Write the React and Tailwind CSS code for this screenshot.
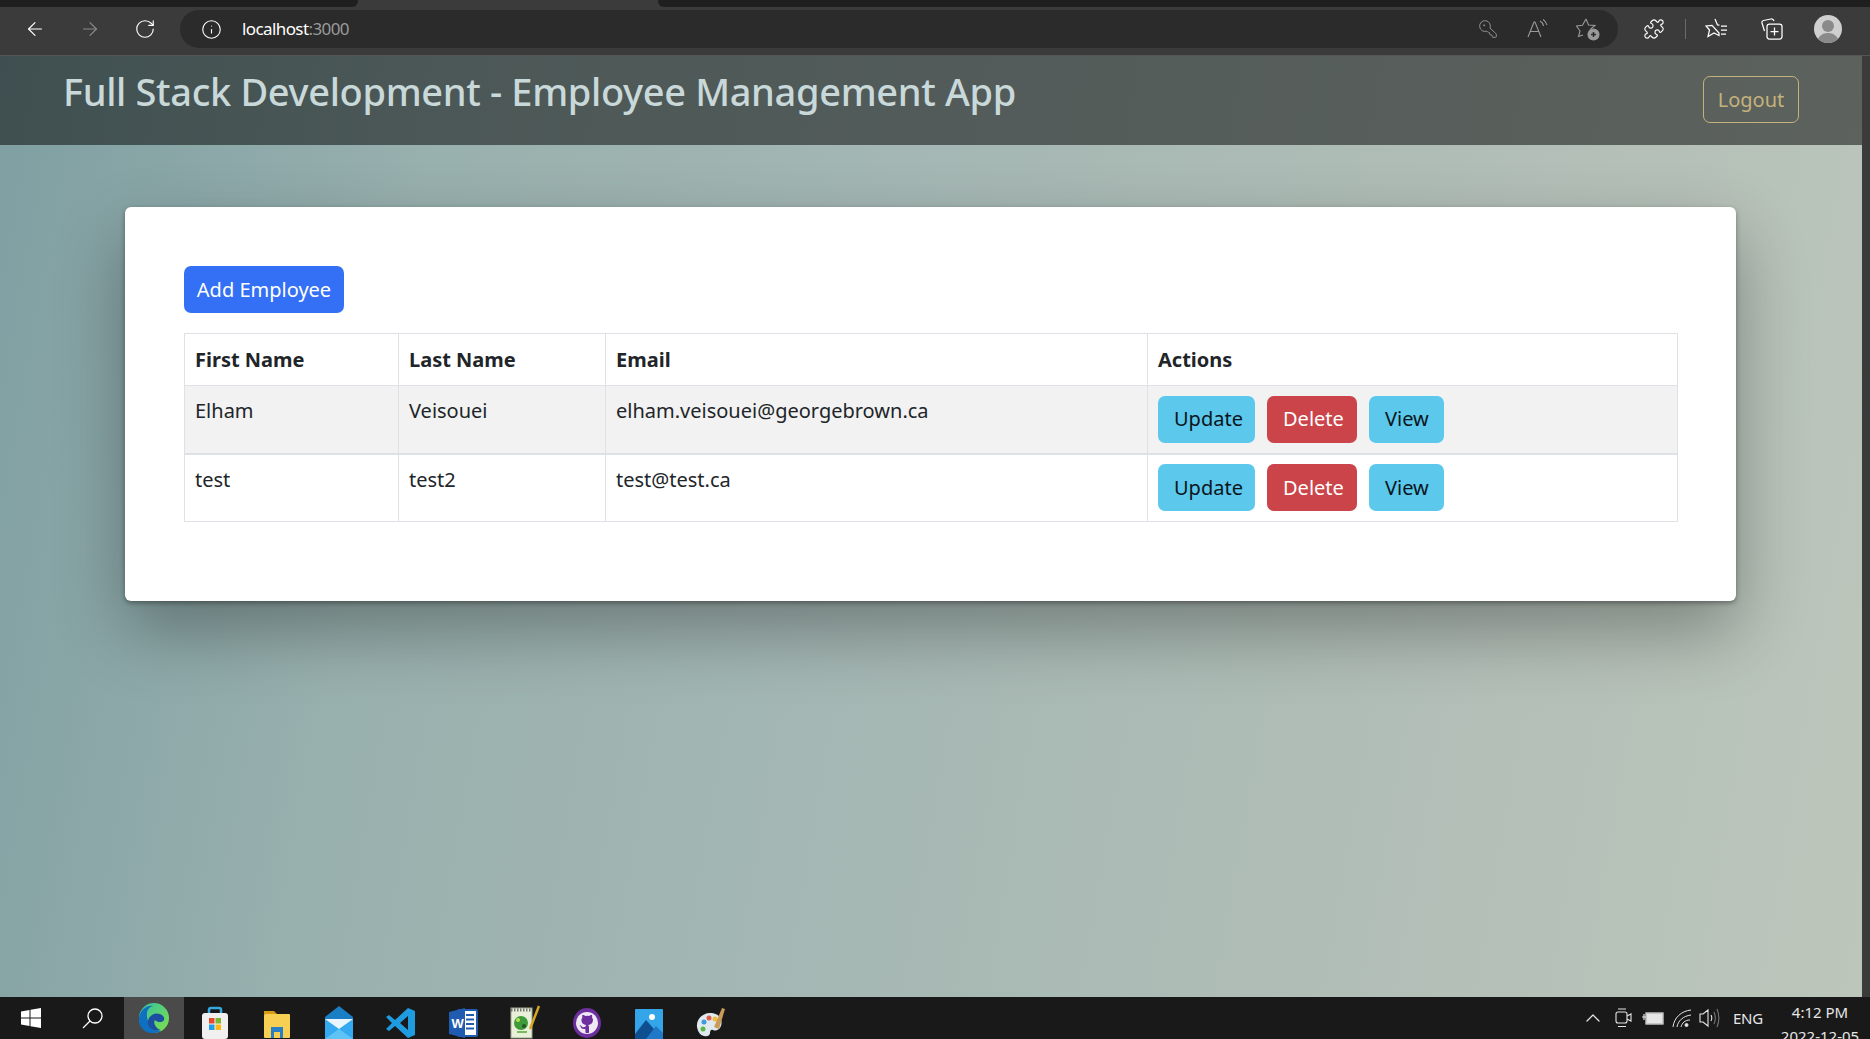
import React from "react";
import { ArrowLeft, ArrowRight, RotateCw, Info, KeyRound, Puzzle, Star, ChevronUp } from "lucide-react";

const F = { fontFamily: '"Noto Sans","Open Sans",sans-serif' };

function Win() { return <svg width="22" height="22" viewBox="0 0 22 22"><path fill="#fff" d="M1 4.5 9.5 3v7.5H1zM10.5 2.8 21 1v9.5H10.5zM1 11.5h8.5V19L1 17.5zM10.5 11.5H21V21l-10.5-1.8z"/></svg>; }
function Edge() { return <svg width="32" height="32" viewBox="0 0 32 32"><defs><linearGradient id="e1" x1="0" y1="0" x2="1" y2="1"><stop offset="0" stopColor="#35c1a0"/><stop offset="1" stopColor="#7fe04a"/></linearGradient></defs><circle cx="16" cy="16" r="15" fill="url(#e1)"/><path d="M1 16C2 8 9 3 15 4c-7 2-7 9-5 15 2 6 7 10 13 10-3 2-6 2-9 2C6 31 0 24 1 16z" fill="#0f6fc0"/><path d="M10 19c1-6 7-9 12-7 5 2 6 7 1 8-3 .5-5-1-6-2-2 2 0 8 6 10-7 2-14-2-13-9z" fill="#1d4fa0"/></svg>; }
function Store() { return <svg width="28" height="34" viewBox="0 0 28 34"><path d="M8 9V5a2 2 0 0 1 2-2h8a2 2 0 0 1 2 2v4" fill="none" stroke="#35a8e0" strokeWidth="2.5"/><rect x="1" y="8" width="26" height="26" rx="3" fill="#f0f0f0"/><rect x="8" y="13" width="5.5" height="5.5" fill="#e8492e"/><rect x="14.5" y="13" width="5.5" height="5.5" fill="#7cb82f"/><rect x="8" y="19.5" width="5.5" height="5.5" fill="#1fa0e8"/><rect x="14.5" y="19.5" width="5.5" height="5.5" fill="#fdb913"/></svg>; }
function Folder() { return <svg width="28" height="32" viewBox="0 0 28 32"><path d="M1 4h10l3 3h-13z" fill="#d89b14"/><rect x="1" y="7" width="26" height="24" rx="1" fill="#f7cf52"/><path d="M8 20h12v11h-3v-6h-6v6H8z" fill="#2a7fc4"/></svg>; }
function Mail() { return <svg width="30" height="34" viewBox="0 0 30 34"><path d="M15 1 29 12v22H1V12z" fill="#1a7ec4"/><path d="M1 14h28v20H1z" fill="#35aaf0"/><path d="M1 14 15 24 29 14z" fill="#eaf6fd"/><path d="M1 34 15 24l14 10z" fill="#5fc3f5"/></svg>; }
function VSCode() { return <svg width="30" height="32" viewBox="0 0 30 32"><path d="M22 1 29 4v24l-7 3L9 19l-6 5-3-2 6-6-6-6 3-2 6 5zM22 9l-8 7 8 7z" fill="#1f9ce0" fillRule="evenodd"/></svg>; }
function Word() { return <svg width="30" height="32" viewBox="0 0 30 32"><rect x="10" y="3" width="19" height="26" rx="1" fill="#fff"/><path d="M18 8h8M18 12.5h8M18 17h8M18 21.5h8" stroke="#1f5bb0" strokeWidth="2"/><rect x="10" y="3" width="19" height="26" rx="1" fill="none" stroke="#1f5bb0" strokeWidth="2"/><path d="M1 5l16-4v30L1 27z" fill="#1f5bb0"/><text x="3.5" y="21" fill="#fff" fontSize="13" fontFamily="Liberation Sans" fontWeight="700">W</text></svg>; }
function Notepad() { return <svg width="30" height="34" viewBox="0 0 30 34"><rect x="1" y="3" width="21" height="30" fill="#e8f0da" stroke="#9aa88a"/><path d="M1 5h21" stroke="#777" strokeWidth="3" strokeDasharray="1.5 1.5"/><ellipse cx="11" cy="18" rx="7" ry="7" fill="#3f9a3a"/><circle cx="8" cy="15" r="2" fill="#b6e35a"/><circle cx="14" cy="21" r="2" fill="#1f5a22"/><path d="M7 27h10" stroke="#7bb95c" strokeWidth="2"/><path d="M29 1 20 24" stroke="#d9a71f" strokeWidth="2.5"/></svg>; }
function Github() { return <svg width="30" height="32" viewBox="0 0 30 32"><ellipse cx="15" cy="16" rx="14" ry="15" fill="#6d2e9e"/><circle cx="15" cy="16" r="11" fill="#efe9f4"/><path d="M15 26c-1.200 0-1.600-.4-1.600-1v-3c-3.500.6-4.400-1.200-4.800-2.200-.2-.6-.9-1.500-1.200-1.800.6-.2 1.700.6 2.100 1.300.9 1.200 2.400.9 3.900.4.100-.8.500-1.300.9-1.600-3-.4-4.900-1.800-4.900-5 0-1 .4-1.900 1-2.600-.1-.3-.4-1.300.1-2.700 1.100 0 2.200.8 2.700 1.100a9 9 0 0 1 4 0c.5-.3 1.600-1.100 2.700-1.100.5 1.400.2 2.400.1 2.700.6.700 1 1.600 1 2.600 0 3.200-1.900 4.600-4.900 5 .5.400.9 1.100.9 2V25c0 .6-.4 1-1 1z" fill="#6d2e9e"/></svg>; }
function Photos() { return <svg width="28" height="30" viewBox="0 0 28 30"><rect width="28" height="30" rx="1" fill="#35a5ea"/><circle cx="17" cy="8" r="3" fill="#fff"/><path d="M0 25 11 11l8 9-3 10H0z" fill="#0f4f8f"/><path d="M11 30 21 17l7 7v6z" fill="#1f78c8"/></svg>; }
function Paint() { return <svg width="32" height="34" viewBox="0 0 32 34"><path d="M2 22C1 14 8 7 17 8c8 1 11 7 9 13-2 5-6 5-8 4-2-1-3 1-3 3s-2 4-6 3c-4-1-6-4-7-9z" fill="#dfe9ef"/><circle cx="9" cy="17" r="2.500" fill="#3f9ae0"/><circle cx="14" cy="13" r="2.500" fill="#e35b4a"/><circle cx="20" cy="14" r="2.500" fill="#f2bd3a"/><circle cx="8" cy="24" r="2.500" fill="#5fb34a"/><path d="M19 22 27 3l3 1-6 20z" fill="#c99a5a"/></svg>; }

function Button({ children, className }) {
  return <button className={`h-[47px] rounded-[7px] px-4 text-[20px] leading-none ${className}`}>{children}</button>;
}

function Row({ a, b, c, striped }) {
  const td = "border-r border-[#dee2e6] px-[10px] pt-[10px] text-[20px] leading-[30px] text-[#212529] align-top";
  return (
    <tr className={`h-[68px] border-b border-[#dee2e6] ${striped ? "bg-[#f2f2f2] border-b-2" : "bg-white"}`}>
      <td className={`${td} border-l`}>{a}</td>
      <td className={td}>{b}</td>
      <td className={td}>{c}</td>
      <td className="border-r border-[#dee2e6] px-[10px] align-middle">
        <div className="flex gap-3">
          <Button className="w-[97px] bg-[#5bc8ec] text-[#0a1520]">Update</Button>
          <Button className="w-[90px] bg-[#cb444a] text-white">Delete</Button>
          <Button className="w-[75px] bg-[#5bc8ec] text-[#0a1520]">View</Button>
        </div>
      </td>
    </tr>
  );
}

export default function App() {
  const th = "border-r border-[#dee2e6] px-[10px] text-left text-[20px] font-bold text-[#212529]";
  return (
    <div style={F} className="flex h-screen w-full flex-col overflow-hidden bg-[#3b3b3b]">
      <div className="flex h-[7px] justify-between bg-[#3b3b3b]">
        <div className="h-full w-[358px] rounded-br-md bg-[#1f1f1f]" />
        <div className="h-full w-[1212px] rounded-bl-md bg-[#1f1f1f]" />
      </div>
      <div className="flex h-[49px] items-center border-b border-[#555] bg-[#3b3b3b] pb-[4px] pl-[24px]">
        <ArrowLeft size={22} strokeWidth={1.25} className="text-white" />
        <ArrowRight size={22} strokeWidth={1.25} className="ml-[33px] text-[#8a8a8a]" />
        <RotateCw size={22} strokeWidth={1.25} className="ml-[33px] text-white" />
        <div className="ml-[24px] flex h-[38px] w-[1438px] items-center rounded-full bg-[#2b2b2b] pl-[21px]">
          <Info size={21} strokeWidth={1.25} className="text-white" />
          <span className="ml-[20px] text-[17px] tracking-[-0.6px] text-white">localhost<span className="text-[#9a9a9a]">:3000</span></span>
          <div className="ml-auto flex items-center gap-[28px] pr-[18px] text-[#9a9a9a]">
            <KeyRound size={20} strokeWidth={1.1} className="-scale-x-100" />
            <svg width="22" height="22" viewBox="0 0 22 22" fill="none" stroke="currentColor" strokeWidth="1.1"><path d="M2 19 8 4h1l6 15M4.500 13.500h8M14 3c2 1 3 2.500 3.500 5M17 1.500c2 1.200 3.500 3.200 4 5.500"/></svg>
            <svg width="24" height="24" viewBox="0 0 24 24" fill="none" stroke="currentColor" strokeWidth="1.1"><path d="M10 2l2.500 6 6.500.5-5 4.200M7 18l-4.500 1.500L4 14 0.500 9l6-.7L10 2"/><circle cx="17.500" cy="17.500" r="5.500" fill="#9a9a9a"/><path d="M15 17.500h5M17.500 15v5" stroke="#2b2b2b" strokeWidth="1.500"/></svg>
          </div>
        </div>
        <div className="flex items-center pl-[25px] text-white">
          <Puzzle size={22} strokeWidth={1.25} />
          <div className="ml-[20px] h-[20px] w-px bg-[#6a6a6a]" />
          <svg className="ml-[19px]" width="24" height="24" viewBox="0 0 24 24" fill="none" stroke="currentColor" strokeWidth="1.25"><path d="M10 2l2.500 6 2 .2M14 16v2.500L9 16l-6 3.500L4.500 13 1 9l6-.7zM16 9h6M16 13h6M16 17h5"/></svg>
          <svg className="ml-[31px]" width="24" height="24" viewBox="0 0 24 24" fill="none" stroke="currentColor" strokeWidth="1.25"><path d="M4.500 14 2 6a2 2 0 0 1 1.500-2.500L11 2c1.500-.3 2.500.5 3 2"/><rect x="7" y="7" width="15" height="15" rx="2.500"/><path d="M14.500 10.500v8M10.500 14.500h8"/></svg>
          <div className="relative ml-[30px] h-[28px] w-[28px] overflow-hidden rounded-full bg-[#cfcfcf]">
            <div className="absolute left-[8px] top-[5px] h-[12px] w-[12px] rounded-full bg-[#8a8a8a]" />
            <div className="absolute left-[3px] top-[18px] h-[20px] w-[22px] rounded-full bg-[#8a8a8a]" />
          </div>
        </div>
      </div>

      <div className="flex min-h-0 flex-1 pr-[8px]">
        <main className="flex min-w-0 flex-1 flex-col bg-[linear-gradient(100deg,#7f9fa2_0%,#98b0ae_22%,#a6b8b4_50%,#b0bdb6_72%,#bcc6bb_100%)]">
          <header className="flex h-[89px] items-start justify-between bg-black/50 pl-[63px] pr-[63px]">
            <h1 className="mt-[12px] text-[38px] font-medium leading-[46px] tracking-[-0.35px] text-[#c9d8d9]">Full Stack Development - Employee Management App</h1>
            <button className="mt-[20px] h-[47px] w-[96px] rounded-[7px] border border-[#c5b27b] text-[20px] text-[#c5b27b]">Logout</button>
          </header>
          <section className="ml-[125px] mt-[62px] h-[394px] w-[1611px] rounded-[6px] bg-white px-[59px] pt-[59px] shadow-[0_30px_70px_rgba(0,0,0,0.32),0_2px_5px_rgba(0,0,0,0.35)]">
            <button className="h-[47px] w-[160px] rounded-[7px] bg-[#3470f5] text-[20px] text-white">Add Employee</button>
            <table className="mt-[20px] w-[1494px] table-fixed border-collapse">
              <thead>
                <tr className="h-[52px] border-y border-[#dee2e6]">
                  <th className={`${th} w-[214px] border-l`}>First Name</th>
                  <th className={`${th} w-[207px]`}>Last Name</th>
                  <th className={`${th} w-[542px]`}>Email</th>
                  <th className={th}>Actions</th>
                </tr>
              </thead>
              <tbody>
                <Row a="Elham" b="Veisouei" c="elham.veisouei@georgebrown.ca" striped />
                <Row a="test" b="test2" c="test@test.ca" />
              </tbody>
            </table>
          </section>
        </main>
      </div>

      <footer className="flex h-[42px] items-center bg-[#191919]">
        <div className="flex w-[62px] justify-center"><Win /></div>
        <div className="flex w-[62px] justify-center">
          <svg width="24" height="24" viewBox="0 0 24 24" fill="none" stroke="#fff" strokeWidth="1.3"><circle cx="14" cy="10" r="7"/><path d="M9 15 2 22"/></svg>
        </div>
        <div className="flex h-full w-[60px] items-center justify-center bg-[#4a4a4a]"><Edge /></div>
        <div className="flex h-full items-end">
          <div className="flex w-[62px] justify-center"><Store /></div>
          <div className="flex w-[62px] justify-center"><Folder /></div>
          <div className="flex w-[62px] justify-center"><Mail /></div>
          <div className="flex w-[62px] justify-center"><VSCode /></div>
          <div className="flex w-[62px] justify-center"><Word /></div>
          <div className="flex w-[62px] justify-center"><Notepad /></div>
          <div className="flex w-[62px] justify-center"><Github /></div>
          <div className="flex w-[62px] justify-center"><Photos /></div>
          <div className="flex w-[62px] justify-center"><Paint /></div>
        </div>
        <div className="ml-auto flex h-full items-center pr-[8px] text-[#e6e6e6]">
          <ChevronUp size={24} strokeWidth={1.25} />
          <svg className="ml-[6px]" width="24" height="24" viewBox="0 0 24 24" fill="none" stroke="currentColor" strokeWidth="1.1"><rect x="5" y="6" width="11" height="11" rx="2"/><path d="M16 10l4-2v7l-4-2M7 3h8M7 20.500h8"/></svg>
          <svg className="ml-[6px]" width="24" height="24" viewBox="0 0 24 24" fill="none" stroke="currentColor" strokeWidth="1.2"><path d="M1 11h4M3 8v6"/><rect x="5" y="7" width="17" height="11" /><rect x="6" y="8" width="15" height="9" fill="currentColor"/></svg>
          <svg className="ml-[6px]" width="22" height="22" viewBox="0 0 22 22" fill="none" stroke="currentColor" strokeWidth="1"><path d="M2 20C3 11 10 4 20 3M6 20c1-6 6-11 14-12M10 20c1-4 4-7 9-7"/><circle cx="15.500" cy="18" r="1.500" fill="currentColor"/></svg>
          <svg className="ml-[4px]" width="24" height="24" viewBox="0 0 24 24" fill="none" stroke="currentColor" strokeWidth="1.1"><path d="M3 8v8h3l5 4V4L6 8z"/><path d="M14 9c1 2 1 4 0 6"/><path d="M17 6c1.800 4 1.800 8 0 12M20 3c2.500 6 2.500 12 0 18" stroke="#777"/></svg>
          <span className="ml-[12px] text-[15px] tracking-[-0.2px]">ENG</span>
          <div className="ml-[15px] flex h-full w-[84px] flex-col items-center overflow-hidden pt-[3px] text-[15px] leading-[24px]">
            <span>4:12 PM</span>
            <span className="whitespace-nowrap">2022-12-05</span>
          </div>
        </div>
      </footer>
    </div>
  );
}
